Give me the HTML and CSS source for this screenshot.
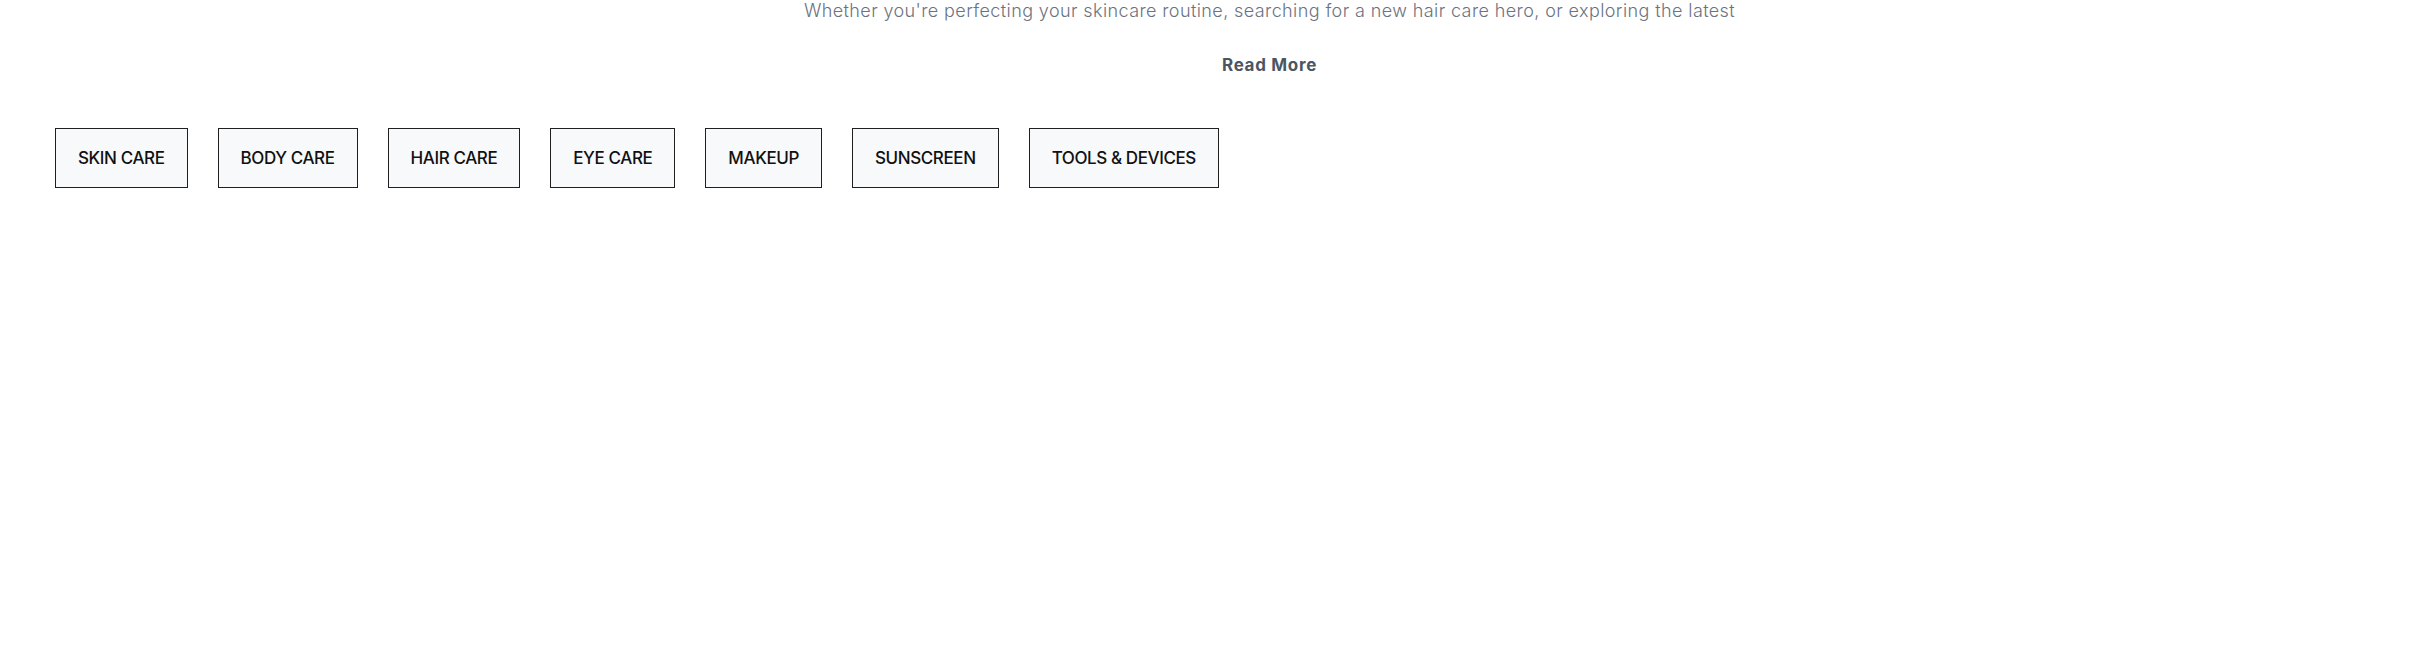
FILE: index.html
```html
<!DOCTYPE html>
<html lang="en">
<head>
<meta charset="utf-8">
<title>Categories</title>
<link rel="stylesheet" href="styles.css">
</head>
<body>
<section class="intro">
  <p class="intro-text">Whether you're perfecting your skincare routine, searching for a new hair care hero, or exploring the latest</p>
  <a class="read-more" href="#">Read More</a>
</section>
<nav class="categories">
  <a class="cat" href="#">SKIN CARE</a>
  <a class="cat" href="#">BODY CARE</a>
  <a class="cat" href="#">HAIR CARE</a>
  <a class="cat" href="#">EYE CARE</a>
  <a class="cat" href="#">MAKEUP</a>
  <a class="cat" href="#">SUNSCREEN</a>
  <a class="cat" href="#">TOOLS &amp; DEVICES</a>
</nav>
</body>
</html>
```
FILE: styles.css
```css
* { box-sizing: border-box; }
html, body { margin: 0; padding: 0; background: #ffffff; }
body {
  font-family: Inter, "Noto Sans", "Liberation Sans", sans-serif;
  width: 2433px;
  height: 665px;
  overflow: hidden;
}
.intro {
  display: flex;
  flex-direction: column;
  align-items: center;
  padding-left: 106px;
}
.intro-text {
  margin: 0;
  font-size: 18px;
  line-height: 22px;
  font-weight: 300;
  letter-spacing: 0.4px;
  color: #6b7280;
  text-align: center;
}
.read-more {
  margin-top: 31px;
  font-size: 17px;
  line-height: 24px;
  font-weight: 700;
  letter-spacing: 0.7px;
  color: #4b5563;
  text-decoration: none;
}
.categories {
  display: flex;
  gap: 30px;
  padding-left: 55px;
  margin-top: 51px;
}
.cat {
  display: flex;
  align-items: center;
  height: 60px;
  padding: 0 22px;
  border: 1px solid #1f1f1f;
  background: #f8f9fb;
  color: #111111;
  font-size: 17px;
  font-weight: 500;
  letter-spacing: -0.4px;
  text-decoration: none;
  white-space: nowrap;
}
```
